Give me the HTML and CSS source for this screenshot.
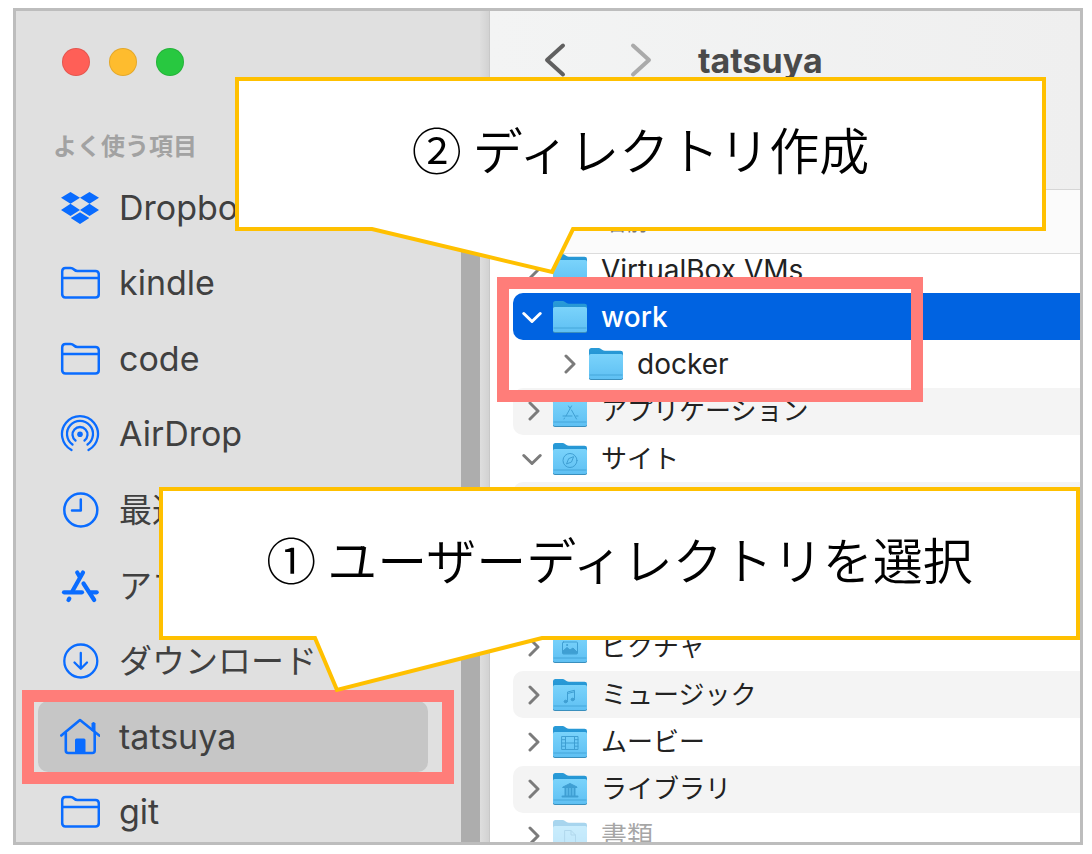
FILE: index.html
```html
<!DOCTYPE html>
<html lang="ja">
<head>
<meta charset="utf-8">
<title>tatsuya</title>
<link rel="stylesheet" href="styles.css">
</head>
<body>
<svg class="defs" aria-hidden="true">
  <defs>
    <linearGradient id="front" x1="0" y1="0" x2="0" y2="1">
      <stop offset="0" stop-color="#7ad3fb"/><stop offset="1" stop-color="#5fc0f3"/>
    </linearGradient>
    <linearGradient id="back" x1="0" y1="0" x2="0" y2="1">
      <stop offset="0" stop-color="#2a9bd8"/><stop offset="1" stop-color="#1686c6"/>
    </linearGradient>
    <symbol id="folder" viewBox="0 0 36 34">
      <path d="M1 31V3.500Q1 1 3.500 1H10.500Q12 1 13 2L14.500 3Q15.500 3.700 17 3.700H32.500Q35 3.700 35 6V31Z" fill="url(#back)"/>
      <rect x="1" y="7" width="34" height="26" rx="1.800" fill="#3a8fbd"/>
      <rect x="1" y="7" width="34" height="25" rx="1.800" fill="url(#front)"/>
      <path d="M1.500 28H34.500" stroke="#45a6da" stroke-width="1"/>
    </symbol>
    <symbol id="closed" viewBox="0 0 20 20"><path d="M6 2 14 10 6 18" fill="none" stroke="currentColor" stroke-width="3" stroke-linecap="round" stroke-linejoin="round"/></symbol>
    <symbol id="open" viewBox="0 0 20 20"><path d="M1.800 6.500 10 14.500 18.200 6.500" fill="none" stroke="currentColor" stroke-width="3" stroke-linecap="round" stroke-linejoin="round"/></symbol>
    <symbol id="side-folder" viewBox="0 0 40 40">
      <g fill="none" stroke="currentColor" stroke-width="2.500" stroke-linejoin="round">
        <path d="M2.200 32V8.500Q2.200 5 5.500 5H10.500Q12.500 5 14 6.500 15.500 8 17.500 8H35.500Q38.800 8 38.800 11.500V31Q38.800 34.500 35.500 34.500H5.500Q2.200 34.500 2.200 31Z"/>
        <path d="M2.200 15H38.800"/>
      </g>
    </symbol>
  </defs>
</svg>

<main class="window">
  <aside class="sidebar">
    <div class="side-main">
      <div class="side-top">
        <div class="lights">
          <button class="light red" aria-label="閉じる"></button>
          <button class="light yellow" aria-label="しまう"></button>
          <button class="light green" aria-label="拡大"></button>
        </div>
        <h2 class="side-title">よく使う項目</h2>
      </div>
      <nav class="places">
        <a class="place" href="#"><svg class="side-icon" viewBox="0 0 40 40"><path fill="currentColor" d="M10.500 4 20 9.800 10.500 15.800 1 9.800ZM29.500 4 39 9.800 29.500 15.800 20 9.800ZM10.500 15.800 20 22 10.500 28 1 22ZM29.500 15.800 39 22 29.500 28 20 22ZM20 24.200 29.300 30 20 36 10.700 30Z"/></svg>Dropbox</a>
        <a class="place" href="#"><svg class="side-icon"><use href="#side-folder"/></svg>kindle</a>
        <a class="place" href="#"><svg class="side-icon"><use href="#side-folder"/></svg>code</a>
        <a class="place" href="#"><svg class="side-icon" viewBox="0 0 40 40"><g fill="none" stroke="currentColor" stroke-width="2.300" stroke-linecap="round"><path d="M11.500 36A18 18 0 1 1 28.500 36"/><path d="M12.500 30.500A13 13 0 1 1 27.500 30.500"/><path d="M15.500 26.500A7.500 7.500 0 1 1 24.500 26.500"/></g><circle cx="20" cy="20.300" r="2.800" fill="currentColor"/></svg>AirDrop</a>
        <a class="place ja" href="#"><svg class="side-icon" viewBox="0 0 40 40"><g fill="none" stroke="currentColor" stroke-width="2.500" stroke-linecap="round" stroke-linejoin="round"><circle cx="20.800" cy="20" r="16.500"/><path d="M20.800 9.500V20.500H12"/></g></svg>最近の項目</a>
        <a class="place ja" href="#"><svg class="side-icon" viewBox="0 0 40 40"><g fill="none" stroke="currentColor" stroke-width="4.200" stroke-linecap="round"><path d="M17.200 6.500 19.700 10.700"/><path d="M23 6.500 12.500 25"/><path d="M4 26.300H22"/><path d="M31 26.300H36.700"/><path d="M23.500 17.500 34.200 34"/><path d="M9.300 32.600 8.500 34"/></g></svg>アプリケーション</a>
        <a class="place ja" href="#"><svg class="side-icon" viewBox="0 0 40 40"><g fill="none" stroke="currentColor" stroke-width="2.300" stroke-linecap="round" stroke-linejoin="round"><circle cx="20.800" cy="20" r="16.500"/><path d="M20.800 12V27.500M14.500 21.500 20.800 27.800 27 21.500"/></g></svg>ダウンロード</a>
        <a class="place current" href="#" aria-current="page"><svg class="side-icon" viewBox="0 0 40 40"><g fill="none" stroke="currentColor" stroke-width="2.600" stroke-linecap="round" stroke-linejoin="round"><path d="M1.300 18.500 20 3 39.300 18.500"/><path d="M5.800 16V33.500Q5.800 36 8.300 36H32.200Q34.700 36 34.700 33.500V16"/><path d="M33.500 12.500V6.200"/></g><path d="M33.500 6V14" stroke="currentColor" stroke-width="4"/><path d="M15 37V23Q15 21.500 16.500 21.500H24Q25.500 21.500 25.500 23V37Z" fill="currentColor"/></svg>tatsuya</a>
        <a class="place" href="#"><svg class="side-icon"><use href="#side-folder"/></svg>git</a>
      </nav>
    </div>
    <div class="scrollbar"></div>
    <div class="divider"></div>
  </aside>

  <section class="content">
    <header class="toolbar">
      <button class="arrow" aria-label="戻る"><svg viewBox="0 0 24 36"><path d="M20 3.500 4 18 20 32.500"/></svg></button>
      <button class="arrow next" aria-label="進む"><svg viewBox="0 0 24 36"><path d="M4 3.500 20 18 4 32.500"/></svg></button>
      <h1 class="title">tatsuya</h1>
    </header>
    <table class="files">
      <thead><tr><th scope="col">名前</th></tr></thead>
      <tbody>
        <tr class="latin"><td><button class="toggle" aria-label="開く"><svg><use href="#closed"/></svg></button><svg class="folder"><use href="#folder"/></svg>VirtualBox VMs</td></tr>
        <tr class="latin selected"><td><button class="toggle expanded" aria-label="閉じる"><svg><use href="#open"/></svg></button><svg class="folder"><use href="#folder"/></svg>work</td></tr>
        <tr class="latin nested"><td><button class="toggle" aria-label="開く"><svg><use href="#closed"/></svg></button><svg class="folder"><use href="#folder"/></svg>docker</td></tr>
        <tr><td><button class="toggle" aria-label="開く"><svg><use href="#closed"/></svg></button><svg class="folder" viewBox="0 0 36 34"><use href="#folder"/><path class="glyph" d="M16.500 12 17.700 14M19.500 12 14 22M11 22H20M24 22H26M19.500 16 24.500 25M12.500 24 12 25"/></svg>アプリケーション</td></tr>
        <tr><td><button class="toggle expanded" aria-label="閉じる"><svg><use href="#open"/></svg></button><svg class="folder" viewBox="0 0 36 34"><use href="#folder"/><circle class="glyph" cx="18" cy="18.500" r="7"/><path class="glyph" d="M21.500 15 19.500 20 14.500 22 16.500 17Z"/></svg>サイト</td></tr>
        <tr><td></td></tr>
        <tr><td></td></tr>
        <tr><td></td></tr>
        <tr><td><button class="toggle" aria-label="開く"><svg><use href="#closed"/></svg></button><svg class="folder" viewBox="0 0 36 34"><use href="#folder"/><rect class="glyph" x="10.500" y="12" width="15" height="12" rx="1"/><path class="glyph solid" d="M11 23V21L15 17.500 18 20 21 18 25 22V23Z"/><circle class="glyph solid" cx="15" cy="15" r="0.500"/></svg>ピクチャ</td></tr>
        <tr><td><button class="toggle" aria-label="開く"><svg><use href="#closed"/></svg></button><svg class="folder" viewBox="0 0 36 34"><use href="#folder"/><path class="glyph" d="M15.500 22.500V14L22.500 12.300V20.500M15.500 15.500 22.500 13.800"/><ellipse class="glyph solid" cx="13.700" cy="23.500" rx="1.600" ry="1.300"/><ellipse class="glyph solid" cx="20.700" cy="21.500" rx="1.600" ry="1.300"/></svg>ミュージック</td></tr>
        <tr><td><button class="toggle" aria-label="開く"><svg><use href="#closed"/></svg></button><svg class="folder" viewBox="0 0 36 34"><use href="#folder"/><path class="glyph" d="M10 11.500H26V24.500H10ZM13.500 11.500V24.500M22.500 11.500V24.500M13.500 18H22.500M10 14.700H13.500M10 18H13.500M10 21.200H13.500M22.500 14.700H26M22.500 18H26M22.500 21.200H26"/></svg>ムービー</td></tr>
        <tr><td><button class="toggle" aria-label="開く"><svg><use href="#closed"/></svg></button><svg class="folder" viewBox="0 0 36 34"><use href="#folder"/><path class="glyph solid" d="M11 15 18 11.500 25 15V15.500H11Z"/><path class="glyph heavy" d="M13.500 16V23.500M16.500 16V23.500M19.500 16V23.500M22.500 16V23.500M10.500 24.500H25.500"/></svg>ライブラリ</td></tr>
        <tr class="dim"><td><button class="toggle" aria-label="開く"><svg><use href="#closed"/></svg></button><svg class="folder" viewBox="0 0 36 34"><use href="#folder"/><path class="glyph" d="M13 11.500H19L23.500 16V25.500H13ZM19 11.500V16H23.500"/></svg><span>書類</span></td></tr>
      </tbody>
    </table>
  </section>
</main>

<div class="mark mark-user"></div>
<div class="mark mark-work"></div>
<div class="callout callout-create">
  <svg class="bubble"><path d="M2 2H809V152H338L317 195 137 152H2Z"/></svg>
  <p>② ディレクトリ作成</p>
</div>
<div class="callout callout-select">
  <svg class="bubble"><path d="M2 2H919V151H383L178 203 156 151H2Z"/></svg>
  <p>① ユーザーディレクトリを選択</p>
</div>
</body>
</html>
```
FILE: styles.css
```css
* {
  box-sizing: border-box;
}

body {
  margin: 0;
  padding: 8px 9px 9px 13px;
  height: 100vh;
  position: relative;
  overflow: hidden;
  background: #fff;
  font-family: Inter, "Noto Sans CJK JP", sans-serif;
  color: #222;
}

button {
  padding: 0;
  border: 0;
  background: none;
  color: inherit;
}

.defs {
  position: absolute;
  width: 0;
  height: 0;
}

.window {
  display: flex;
  height: 100%;
  border: 3px solid #bdbdbd;
  overflow: hidden;
  isolation: isolate;
}

/* sidebar */
.sidebar {
  display: flex;
  flex: 0 0 474px;
  background: #e0e0e0;
  border-right: 1px solid #c8c8c8;
}

.side-main {
  flex: 1;
  display: flex;
  flex-direction: column;
  min-width: 0;
}

.side-top {
  height: 159px;
  padding: 37px 37px 0;
}

.lights {
  display: flex;
  gap: 19px;
  padding-left: 9px;
}

.light {
  width: 28px;
  height: 28px;
  border-radius: 50%;
  border: 1px solid #0000001a;
}

.red { background: #ff5f57; }
.yellow { background: #febc2e; }
.green { background: #28c840; }

.side-title {
  margin: 53px 0 0;
  font-size: 24px;
  line-height: 36px;
  font-weight: 700;
  color: #a2a2a2;
}

.places {
  flex: 1;
  min-height: 0;
  display: grid;
  grid-auto-rows: 1fr;
  margin: 0 33px -8px 22px;
}

.place {
  display: flex;
  align-items: center;
  gap: 19px;
  margin: 2px 0;
  padding-left: 22px;
  border-radius: 10px;
  font-size: 34px;
  line-height: 40px;
  color: #404040;
  text-decoration: none;
  white-space: nowrap;
  overflow: hidden;
}

.ja {
  font-size: 33px;
}

.current {
  background: #c6c6c6;
}

.side-icon {
  flex: none;
  width: 40px;
  height: 40px;
  color: #0a6cff;
}

.scrollbar {
  width: 19px;
  margin-top: 179px;
  background: #adadad;
}

.divider {
  width: 9px;
  background: linear-gradient(90deg, #dedede, #d2d2d2);
}

/* main pane */
.content {
  flex: 1;
  min-width: 0;
  display: flex;
  flex-direction: column;
  background: #fff;
}

.toolbar {
  flex: none;
  display: flex;
  align-items: flex-start;
  height: 179px;
  padding: 31px 0 0 53px;
  background: linear-gradient(90deg, #f3f4f4, #efefef);
  border-bottom: 1px solid #d6d6d6;
}

.arrow {
  width: 24px;
  height: 36px;
  margin-right: 62px;
  color: #606060;
}

.arrow svg {
  display: block;
  width: 24px;
  height: 36px;
  fill: none;
  stroke: currentColor;
  stroke-width: 4;
  stroke-linecap: round;
  stroke-linejoin: round;
}

.next {
  margin-right: 45px;
  color: #aaa;
}

.title {
  margin: 0;
  font-size: 34px;
  line-height: 38px;
  font-weight: 700;
  color: #4a4a4a;
}

.files {
  flex: 1;
  min-height: 0;
  display: flex;
  flex-direction: column;
}

thead {
  display: block;
  position: relative;
  z-index: 1;
  height: 64px;
  background: #fbfbfb;
  border-bottom: 1px solid #dcdcdc;
}

th {
  padding: 15px 0 0 112px;
  font-size: 22px;
  line-height: 30px;
  font-weight: 400;
  color: #777;
}

tbody {
  flex: 1;
  min-height: 0;
  display: grid;
  grid-auto-rows: 1fr;
  margin: -8px 0 -18px 23px;
}

tbody tr {
  display: flex;
  min-height: 0;
  border-radius: 10px 0 0 10px;
}

tbody tr:nth-child(even) {
  background: #f4f4f4;
}

td {
  display: flex;
  align-items: center;
  padding: 0 0 0 11px;
  font-size: 26px;
  line-height: 32px;
  white-space: nowrap;
}

.latin td {
  font-size: 28px;
}

.nested td {
  padding-left: 47px;
}

tbody tr.selected:nth-child(even) {
  background: #0063e1;
  color: #fff;
  font-weight: 500;
}

.toggle {
  width: 20px;
  height: 20px;
  margin-right: 8px;
  color: #7b7b7b;
}

.expanded {
  margin-left: -2px;
  margin-right: 10px;
}

.selected .toggle {
  color: #fff;
}

.toggle svg {
  display: block;
  width: 20px;
  height: 20px;
}

.folder {
  flex: none;
  width: 36px;
  height: 34px;
  margin-right: 13px;
}

.glyph {
  fill: none;
  stroke: #3f9fd3;
  stroke-width: 1;
  stroke-linecap: round;
}

.solid {
  fill: #3f9fd3;
}

.heavy {
  stroke-width: 2;
}

.dim .folder,
.dim span {
  opacity: 0.4;
}

/* annotations laid over the window */
.mark {
  position: absolute;
  border: 12px solid #ff7d79;
}

.mark-user {
  left: 22px;
  top: 690px;
  width: 432px;
  height: 94px;
}

.mark-work {
  left: 497px;
  top: 277px;
  width: 426px;
  height: 125px;
}

.callout {
  position: absolute;
  display: flex;
  align-items: center;
  justify-content: center;
  padding-bottom: 12px;
  font-family: "Noto Sans CJK JP", sans-serif;
  font-size: 50px;
  font-weight: 350;
  line-height: 60px;
  color: #000;
}

.callout p {
  position: relative;
  margin: 0;
  white-space: nowrap;
}

.callout-create {
  left: 235px;
  top: 77px;
  width: 811px;
  height: 154px;
}

.callout-select {
  left: 159px;
  top: 487px;
  width: 921px;
  height: 153px;
}

.bubble {
  position: absolute;
  inset: 0;
  width: 100%;
  height: 100%;
  overflow: visible;
  fill: #fff;
  stroke: #ffc000;
  stroke-width: 4;
}
```
